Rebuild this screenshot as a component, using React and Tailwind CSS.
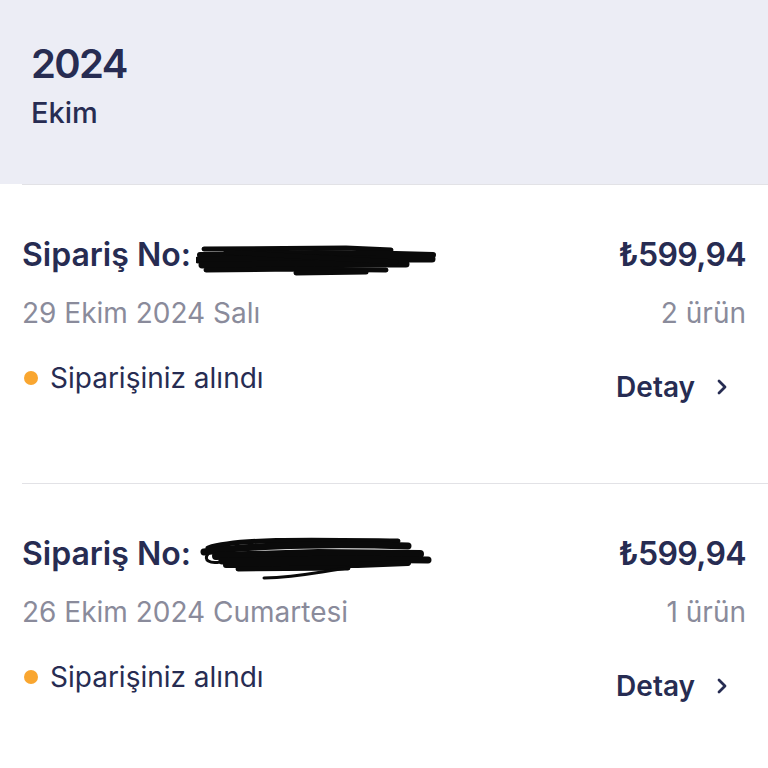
import React from "react";

const font = { fontFamily: 'Inter, "Liberation Sans", Arial, sans-serif' };

function Scribble({ variant }) {
  if (variant === 1) {
    return (
      <svg width="240" height="34" viewBox="0 0 240 34" className="absolute left-[174px] top-[8px]">
        <g stroke="#0a0a0a" strokeLinecap="round" fill="none">
          <path d="M8 6 L150 5 L195 7" strokeWidth="5" />
          <path d="M4 12 L120 10 L200 11 L237 12" strokeWidth="6" />
          <path d="M2 17 L90 15 L180 16 L236 16" strokeWidth="7" />
          <path d="M6 22 L120 21 L210 21" strokeWidth="7" />
          <path d="M10 27 L100 26 L190 27" strokeWidth="5" />
          <path d="M100 30 L170 29" strokeWidth="5" />
          <path d="M30 9 L200 19" strokeWidth="5" />
        </g>
      </svg>
    );
  }
  return (
    <svg width="240" height="50" viewBox="0 0 240 50" className="absolute left-[176px] top-[0px]">
      <g stroke="#0a0a0a" strokeLinecap="round" fill="none">
        <path d="M10 14 C40 4 120 6 200 7" strokeWidth="5" />
        <path d="M6 18 C60 10 150 10 210 12" strokeWidth="7" />
        <path d="M18 22 L120 19 L222 20" strokeWidth="8" />
        <path d="M24 27 L140 25 L230 26" strokeWidth="7" />
        <path d="M28 31 L160 31 L210 29" strokeWidth="6" />
        <path d="M40 35 L150 34" strokeWidth="5" />
        <path d="M66 44 C100 43 120 38 150 34" strokeWidth="3" />
        <path d="M10 20 C5 26 12 30 22 28" strokeWidth="3" />
      </g>
    </svg>
  );
}

function Chevron() {
  return (
    <svg width="14" height="16" viewBox="0 0 14 16" className="ml-[20px]">
      <path d="M4 2 L10 8 L4 14" stroke="#272c52" strokeWidth="2.8" fill="none" strokeLinecap="round" strokeLinejoin="round" />
    </svg>
  );
}

function Order({ date, count, variant }) {
  return (
    <div className="ml-[22px] h-[299px] border-t border-[#e2e2e6] pr-[22px]">
      <div className="mt-[50px] flex items-baseline justify-between leading-[40px]">
        <div className="relative text-[32px] font-semibold text-[#272c52]">
          Sipariş No:
          <Scribble variant={variant} />
        </div>
        <div className="text-[32px] font-semibold tracking-[-0.02em] text-[#272c52]">₺599,94</div>
      </div>
      <div className="mt-[18px] flex items-baseline justify-between text-[28px] leading-[40px] text-[#8a8b9b]">
        <div>{date}</div>
        <div>{count}</div>
      </div>
      <div className="mt-[25px] flex items-start justify-between">
        <div className="flex items-center gap-[12px] text-[28px] leading-[40px] text-[#272c52]">
          <span className="ml-[2px] h-[14px] w-[14px] rounded-full bg-[#f9a630]" />
          <span>Siparişiniz alındı</span>
        </div>
        <div className="mt-[9px] flex items-center pr-[17px] text-[28px] font-semibold leading-[40px] text-[#272c52]">
          Detay
          <Chevron />
        </div>
      </div>
    </div>
  );
}

export default function App() {
  return (
    <div style={font} className="h-[768px] w-[768px] overflow-hidden bg-white">
      <div className="h-[184px] bg-[#ecedf5] px-[31px] pt-[40px]">
        <div className="text-[40px] font-semibold tracking-[-0.04em] leading-[48px] text-[#272c52]">2024</div>
        <div className="mt-[5px] text-[29px] font-medium leading-[40px] text-[#272c52]">Ekim</div>
      </div>
      <Order date="29 Ekim 2024 Salı" count="2 ürün" variant={1} />
      <Order date="26 Ekim 2024 Cumartesi" count="1 ürün" variant={2} />
    </div>
  );
}
